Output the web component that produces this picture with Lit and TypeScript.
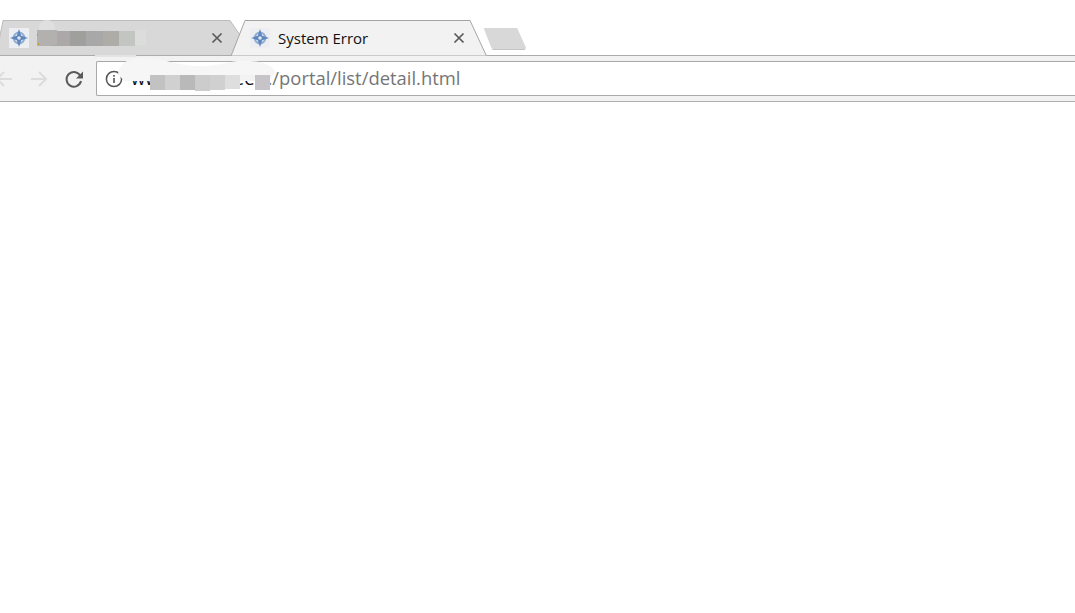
import { LitElement, html, css, svg } from "lit";
import { customElement } from "lit/decorators.js";

const favicon = svg`<svg class="fav" viewBox="0 0 20 20" width="20" height="20">
  <rect width="20" height="20" fill="#eceef1"/>
  <circle cx="10" cy="10" r="5.4" fill="none" stroke="#93aed3" stroke-width="2"/>
  <path d="M10 1 L12.2 7.8 L19 10 L12.2 12.2 L10 19 L7.8 12.2 L1 10 L7.8 7.8 Z" fill="#5c86bd"/>
  <circle cx="10" cy="10" r="1.8" fill="#dfe6f0"/>
</svg>`;

const closeIcon = svg`<svg viewBox="0 0 12 12" width="12" height="12"><path d="M1.5 1.5 L10.5 10.5 M10.5 1.5 L1.5 10.5" stroke="#5a5a5a" stroke-width="1.7" fill="none"/></svg>`;

const tabBlocks = ["#b3b0b0", "#aca7a8", "#9fa09e", "#a9a8a8", "#adaca7", "#c3c5c3"];

/* Redaction smear across the address bar: [x, height, colour], lower band */
const urlLower: [number, number, string][] = [
  [150, 15, "#c2c2c2"],
  [165, 15, "#d0d0d0"],
  [180, 15, "#b9b9b9"],
  [195, 16, "#cccccc"],
  [210, 15, "#d0d0d0"],
  [225, 14, "#dedede"],
  [255, 15, "#c6c4c8"],
];

@customElement("app-root")
export class AppRoot extends LitElement {
  static styles = css`
    :host { display: block; position: relative; width: 1075px; height: 613px; background: #fff; overflow: hidden; font-family: "Open Sans", "Noto Sans", sans-serif; }
    .strip { position: relative; height: 56px; display: flex; align-items: flex-start; }
    .strip-bg { position: absolute; left: 0; top: 0; }
    .tab { position: relative; height: 35px; margin-top: 20px; display: flex; align-items: center; box-sizing: border-box; padding-top: 1px; }
    .tab.one { width: 232px; padding-left: 9px; padding-right: 9px; }
    .tab.two { width: 255px; padding-left: 18px; padding-right: 22px; }
    .fav { flex: none; display: block; }
    .title { font-size: 15px; color: #111; margin-left: 8px; flex: 1; white-space: nowrap; padding-bottom: 1px; }
    .blur { flex: 1; margin-left: 8px; display: flex; height: 15px; }
    .blur i { width: 16.4px; height: 15px; display: block; }
    .close { flex: none; display: flex; }
    .toolbar { height: 45px; background: #f2f2f2; border-bottom: 1px solid #b0b0b0; display: flex; align-items: center; }
    .nav { width: 96px; flex: none; position: relative; height: 100%; }
    .nav svg { position: absolute; top: 13px; }
    .omni { flex: 1; height: 33px; background: #fff; border: 1px solid #a9a9a9; border-right: none; border-radius: 2px 0 0 2px; display: flex; align-items: center; padding-left: 8px; }
    .info { flex: none; margin-right: 8px; display: block; }
    .url { font-size: 18.4px; white-space: nowrap; color: #757575; display: flex; align-items: center; padding-bottom: 2px; }
    .host { color: #111; }
    .mid { color: #111; margin-left: 36px; margin-right: 13px; }
    .smear { position: absolute; left: 0; top: 0; pointer-events: none; }
  `;

  render() {
    return html`
      <div class="strip">
        <svg class="strip-bg" width="1075" height="56" viewBox="0 0 1075 56">
          <path d="M-4 55.5 L3 20.5 H230 L240 35 L232 55.5 Z" fill="#d8d8d8" stroke="#bcbcbc" stroke-width="1"/>
          <path d="M0 55.5 H232 M487 55.5 H1075" stroke="#acacac" stroke-width="1"/>
          <path d="M231 56 L245 20.5 H470 L486.5 56 Z" fill="#f2f2f2" stroke="#a4a4a4" stroke-width="1"/>
          <path d="M485 29 H516.5 L525 48 H492.5 Z" fill="#d8d8d8" stroke="#d8d8d8" stroke-width="2" stroke-linejoin="round"/>
          <path d="M492.5 49.5 H525" stroke="#c4c4c4" stroke-width="1"/>
        </svg>
        <div class="tab one">
          ${favicon}
          <div class="blur">${tabBlocks.map((c) => html`<i style="background:${c}"></i>`)}</div>
          <span class="close">${closeIcon}</span>
        </div>
        <div class="tab two">
          ${favicon}
          <span class="title">System Error</span>
          <span class="close">${closeIcon}</span>
        </div>
      </div>
      <div class="toolbar">
        <div class="nav">
          <svg style="left:-6px" width="20" height="20" viewBox="0 0 20 20"><path d="M18 10 H3 M10 3 L3 10 L10 17" fill="none" stroke="#dcdcdc" stroke-width="2"/></svg>
          <svg style="left:29px" width="20" height="20" viewBox="0 0 20 20"><path d="M2 10 H17 M10 3 L17 10 L10 17" fill="none" stroke="#dcdcdc" stroke-width="2"/></svg>
          <svg style="left:64px" width="20" height="20" viewBox="0 0 20 20"><path d="M16.6 7.5 A7.3 7.3 0 1 0 17 12" fill="none" stroke="#5a5a5a" stroke-width="2"/><path d="M19 2.5 V9.5 H12 Z" fill="#5a5a5a"/></svg>
        </div>
        <div class="omni">
          <svg class="info" width="18" height="18" viewBox="0 0 18 18"><circle cx="9" cy="9" r="7.6" fill="none" stroke="#555" stroke-width="1.5"/><path d="M9 8 V13 M9 5 V6.7" stroke="#555" stroke-width="1.6"/></svg>
          <span class="url"><span class="host">www.xx</span><span class="mid">ee</span>./portal/list/detail.html</span>
        </div>
      </div>
      <svg class="smear" width="1075" height="110" viewBox="0 0 1075 110">
        <circle cx="47" cy="28" r="8" fill="#dfdfdf"/>
        <rect x="37" y="30" width="20" height="15" fill="#b3b0b0"/>
        <rect x="135" y="30" width="11" height="15" fill="#dcdcdc"/>
        <rect x="37" y="34" width="1" height="2" fill="#c9962a"/>
        <rect x="38" y="43" width="1" height="2" fill="#c9962a"/>
        <path d="M118 75 C118 66 126 58 140 58 C165 58 170 64 195 66 C215 67 225 62 238 61 C255 60 272 63 275 72 L270 81 H125 Z" fill="#f6f6f6"/>
        <path d="M95 55 H136 V57 H95 Z" fill="#e4e4e4"/>
        ${urlLower.map(([x, h, c]) => svg`<rect x=${x} y="75" width="15" height=${h} fill=${c}/>`)}
        <rect x="240" y="75" width="15" height="6" fill="#f2f2f2"/>
      </svg>
    `;
  }
}
